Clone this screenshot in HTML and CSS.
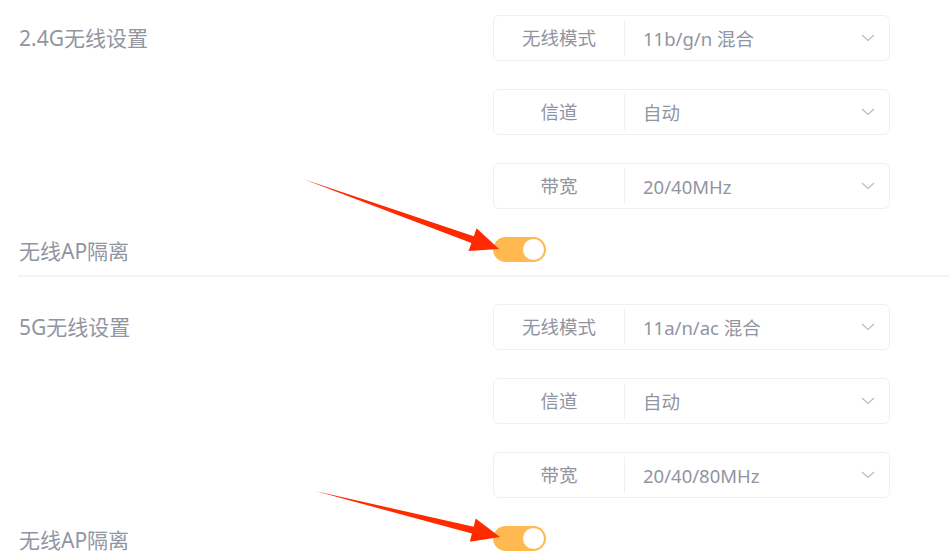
FILE: index.html
```html
<!DOCTYPE html>
<html lang="zh-CN">
  <head>
    <meta charset="UTF-8" />
    <meta name="viewport" content="width=device-width, initial-scale=1.0" />
    <link rel="stylesheet" href="styles.css">
    <title>无线设置</title>
  </head>
  <body>
    <div class="wifi-page">
      <div class="section">
        <div class="field-row">
          <div class="field-title">2.4G无线设置</div>
          <div class="select-list">
            <div class="select-box">
              <span class="select-label">无线模式</span>
              <span class="select-value">11b/g/n 混合</span>
              <svg class="arrow-down" width="14" height="8" viewBox="0 0 14 8"><polyline points="1,1 7,6.5 13,1" /></svg>
            </div>
            <div class="select-box">
              <span class="select-label">信道</span>
              <span class="select-value">自动</span>
              <svg class="arrow-down" width="14" height="8" viewBox="0 0 14 8"><polyline points="1,1 7,6.5 13,1" /></svg>
            </div>
            <div class="select-box">
              <span class="select-label">带宽</span>
              <span class="select-value">20/40MHz</span>
              <svg class="arrow-down" width="14" height="8" viewBox="0 0 14 8"><polyline points="1,1 7,6.5 13,1" /></svg>
            </div>
          </div>
        </div>
        <div class="switch-row">
          <div class="field-title">无线AP隔离</div>
          <div class="switch on"><span class="knob"></span></div>
        </div>
      </div>

      <div class="section">
        <div class="field-row">
          <div class="field-title">5G无线设置</div>
          <div class="select-list">
            <div class="select-box">
              <span class="select-label">无线模式</span>
              <span class="select-value">11a/n/ac 混合</span>
              <svg class="arrow-down" width="14" height="8" viewBox="0 0 14 8"><polyline points="1,1 7,6.5 13,1" /></svg>
            </div>
            <div class="select-box">
              <span class="select-label">信道</span>
              <span class="select-value">自动</span>
              <svg class="arrow-down" width="14" height="8" viewBox="0 0 14 8"><polyline points="1,1 7,6.5 13,1" /></svg>
            </div>
            <div class="select-box">
              <span class="select-label">带宽</span>
              <span class="select-value">20/40/80MHz</span>
              <svg class="arrow-down" width="14" height="8" viewBox="0 0 14 8"><polyline points="1,1 7,6.5 13,1" /></svg>
            </div>
          </div>
        </div>
        <div class="switch-row">
          <div class="field-title">无线AP隔离</div>
          <div class="switch on"><span class="knob"></span></div>
        </div>
      </div>

      <!-- red annotation arrows drawn over the page -->
      <svg class="marks" width="949" height="553" viewBox="0 0 949 553">
        <polygon points="303,179 473.8,236.3 476.6,228.3 499,249 468.6,250.9 471.4,242.9" />
        <polygon points="315,491 473.7,526.8 475.7,518.6 500,537 469.9,541.8 471.9,533.6" />
      </svg>
    </div>
  </body>
</html>
```

FILE: styles.css
```css
* {
  margin: 0;
  padding: 0;
  box-sizing: border-box;
}

body {
  background: #fff;
  font-family: "Noto Sans", "Noto Sans CJK SC", sans-serif;
  color: #91959f;
  overflow: hidden;
}

.wifi-page {
  position: relative;
  height: 553px;
  padding-top: 15px;
}

.section {
  margin-left: 18px;
  border-bottom: 2px solid #f4f4f5;
}

.section + .section {
  padding-top: 27px;
}

.field-row {
  display: flex;
}

.field-title {
  width: 475px;
  padding-left: 1px;
  font-size: 21px;
  line-height: 46px;
}

.select-list {
  display: flex;
  flex-direction: column;
  gap: 28px;
}

.select-box {
  display: flex;
  align-items: center;
  width: 397px;
  height: 46px;
  border: 1px solid #f0f0f2;
  border-radius: 6px;
  font-size: 18.5px;
}

.select-label {
  width: 131px;
  text-align: center;
  border-right: 1px solid #f0f0f2;
  line-height: 36px;
}

.select-value {
  flex: 1;
  padding-left: 18px;
}

.arrow-down {
  margin-right: 14px;
}

.arrow-down polyline {
  fill: none;
  stroke: #b8bcc6;
  stroke-width: 1.2;
}

.switch-row {
  display: flex;
  align-items: flex-start;
  padding: 28px 0 11px;
}

.switch-row .field-title {
  line-height: 25px;
  padding-top: 2px;
}

.switch {
  display: flex;
  justify-content: flex-end;
  align-items: center;
  width: 53px;
  height: 25px;
  padding: 0 2px;
  border-radius: 13px;
  background: #ffb950;
}

.knob {
  width: 21px;
  height: 21px;
  border-radius: 50%;
  background: #fff;
}

.marks {
  position: absolute;
  left: 0;
  top: 0;
  pointer-events: none;
}

.marks polygon {
  fill: #ff2a00;
}
```
